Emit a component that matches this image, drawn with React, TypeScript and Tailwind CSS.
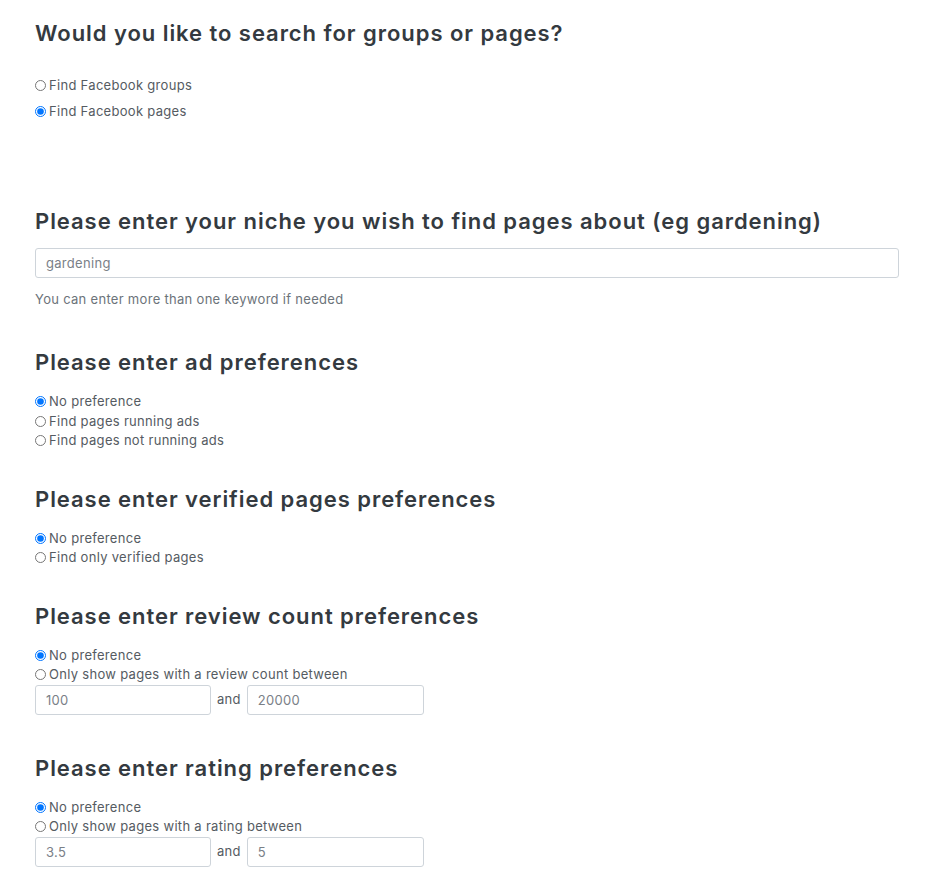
import React from "react";

const font = { fontFamily: '"Inter", "Liberation Sans", sans-serif' };

function Radio({ label, checked, name }: { label: string; checked?: boolean; name: string }) {
  return (
    <label className="flex h-[19.5px] items-center text-[13px] tracking-[0.3px] text-[#555b62]">
      <input type="radio" name={name} defaultChecked={checked} className="m-0 mr-[3px] h-[11px] w-[11px] accent-[#0075ff]" />
      <span>{label}</span>
    </label>
  );
}

function Heading({ children }: { children: React.ReactNode }) {
  return <h4 className="text-[22px] font-semibold leading-[28px] tracking-[0.95px] text-[#343a40]">{children}</h4>;
}

function Field({ value, className }: { value: string; className?: string }) {
  return (
    <input
      readOnly
      value={value}
      className={"h-[30px] rounded-[3px] border border-[#ced4da] bg-white px-[10px] text-[13px] tracking-[0.3px] text-[#7a8087] outline-none " + (className ?? "")}
    />
  );
}

function Range({ from, to }: { from: string; to: string }) {
  return (
    <div className="flex items-center gap-[6px]">
      <Field value={from} className="w-[176px]" />
      <span className="text-[13px] tracking-[0.3px] text-[#555b62]">and</span>
      <Field value={to} className="w-[177px]" />
    </div>
  );
}

export default function App() {
  return (
    <div className="min-h-[891px] bg-white px-[35px] pt-[19px]" style={font}>
      <Heading>Would you like to search for groups or pages?</Heading>
      <div className="mt-[29px] flex flex-col gap-[6.5px]">
        <Radio name="type" label="Find Facebook groups" />
        <Radio name="type" label="Find Facebook pages" checked />
      </div>

      <div className="mt-[85px]">
        <Heading>Please enter your niche you wish to find pages about (eg gardening)</Heading>
      </div>
      <Field value="gardening" className="mt-[13px] w-[864px]" />
      <p className="mt-[12px] text-[13px] tracking-[0.3px] text-[#6c737a]">You can enter more than one keyword if needed</p>

      <div className="mt-[39px]">
        <Heading>Please enter ad preferences</Heading>
      </div>
      <div className="mt-[16px] flex flex-col">
        <Radio name="ads" label="No preference" checked />
        <Radio name="ads" label="Find pages running ads" />
        <Radio name="ads" label="Find pages not running ads" />
      </div>

      <div className="mt-[34px]">
        <Heading>Please enter verified pages preferences</Heading>
      </div>
      <div className="mt-[16px] flex flex-col">
        <Radio name="verified" label="No preference" checked />
        <Radio name="verified" label="Find only verified pages" />
      </div>

      <div className="mt-[34px]">
        <Heading>Please enter review count preferences</Heading>
      </div>
      <div className="mt-[16px] flex flex-col">
        <Radio name="reviews" label="No preference" checked />
        <Radio name="reviews" label="Only show pages with a review count between" />
      </div>
      <Range from="100" to="20000" />

      <div className="mt-[39px]">
        <Heading>Please enter rating preferences</Heading>
      </div>
      <div className="mt-[16px] flex flex-col">
        <Radio name="rating" label="No preference" checked />
        <Radio name="rating" label="Only show pages with a rating between" />
      </div>
      <Range from="3.5" to="5" />
    </div>
  );
}
